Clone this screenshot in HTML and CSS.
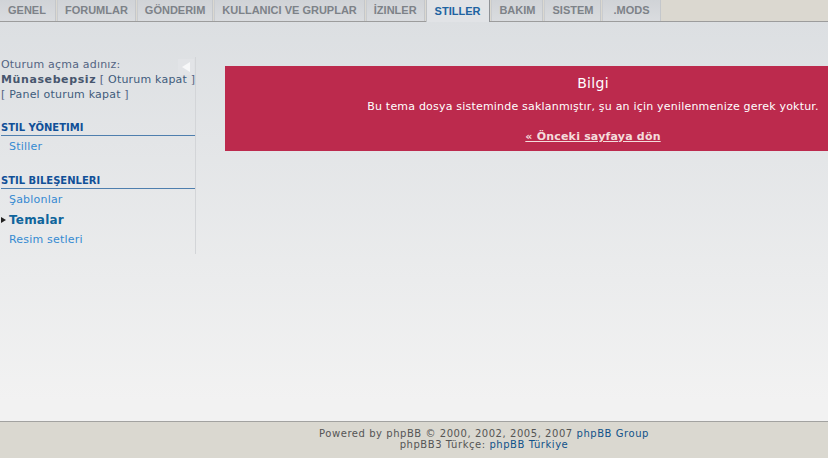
FILE: index.html
```html
<!DOCTYPE html>
<html lang="tr">
<head>
<meta charset="utf-8">
<title>Yönetim Kontrol Paneli</title>
<link rel="stylesheet" href="styles.css">
</head>
<body>
<div class="page">
  <div class="tabs">
    <a class="tab">GENEL</a>
    <a class="tab">FORUMLAR</a>
    <a class="tab">GÖNDERIM</a>
    <a class="tab">KULLANICI VE GRUPLAR</a>
    <a class="tab">İZINLER</a>
    <a class="tab active">STILLER</a>
    <a class="tab">BAKIM</a>
    <a class="tab">SISTEM</a>
    <a class="tab">.MODS</a>
  </div>
  <div class="content">
    <div class="sidebar">
      <span class="collapse"><svg width="10" height="10" viewBox="0 0 10 10"><polygon points="9,0 9,10 1,5" fill="#f7f8f9"/></svg></span>
      <div class="login">
        Oturum açma adınız:<br>
        <strong>Münasebepsiz</strong> [ <a>Oturum kapat</a> ]<br>
        [ <a>Panel oturum kapat</a> ]
      </div>
      <div class="menu-block">
        <div class="menu-head">STIL YÖNETIMI</div>
        <a class="menu-item">Stiller</a>
      </div>
      <div class="menu-block">
        <div class="menu-head">STIL BILEŞENLERI</div>
        <a class="menu-item">Şablonlar</a>
        <a class="menu-item current"><svg class="bullet" width="5" height="6" viewBox="0 0 5 6"><polygon points="0,0 5,3 0,6" fill="#222"/></svg>Temalar</a>
        <a class="menu-item">Resim setleri</a>
      </div>
    </div>
    <div class="main">
      <div class="message">
        <h2>Bilgi</h2>
        <p>Bu tema dosya sisteminde saklanmıştır, şu an için yenilenmenize gerek yoktur.</p>
        <a class="back">« Önceki sayfaya dön</a>
      </div>
    </div>
  </div>
  <div class="footer">
    Powered by phpBB © 2000, 2002, 2005, 2007 <a>phpBB Group</a><br>
    phpBB3 Türkçe: <a>phpBB Türkiye</a>
  </div>
</div>
</body>
</html>
```

FILE: styles.css
```css
html, body {
  margin: 0;
  padding: 0;
  height: 458px;
  overflow: hidden;
}
body {
  font-family: "DejaVu Sans", Verdana, sans-serif;
  background: #dcdfe2;
  letter-spacing: 0.2px;
}
.page {
  width: 968px;
  height: 458px;
  display: flex;
  flex-direction: column;
  background: linear-gradient(#dcdfe2 20px, #f2f2f2 400px);
}
.tabs {
  display: flex;
  height: 21px;
  background: #dbd8d0;
  border-bottom: 1px solid #9c9c9c;
  box-sizing: content-box;
  letter-spacing: 0;
}
.tab {
  display: flex;
  align-items: center;
  padding: 0 7px 1px 7px;
  margin-right: 1px;
  background: linear-gradient(#d0d3d7, #dadcdf);
  border-left: 1px solid #c9ccd0;
  border-right: 1px solid #c4c7cb;
  font-family: "Liberation Sans", Arial, sans-serif;
  font-weight: bold;
  font-size: 11px;
  color: #7d8288;
  white-space: nowrap;
}
.tab:first-child {
  border-left: none;
  padding: 0 9px 1px 8px;
}
.tab:last-child {
  padding: 0 10px 1px 10px;
}
.tab.active {
  background: #e1e3e6;
  color: #2063a1;
  height: 22px;
  margin-bottom: -1px;
  padding: 0 9px 0 8px;
  border-left-color: #bfc2c6;
  border-right-color: #8f9296;
}
.content {
  flex: 1;
  display: flex;
  align-items: flex-start;
}
.sidebar {
  position: relative;
  width: 194px;
  margin-top: 35px;
  padding: 0 0 4px 1px;
  border-right: 1px solid #d3d5d8;
  font-size: 11px;
  color: #536482;
  white-space: nowrap;
  overflow: hidden;
}
.collapse {
  position: absolute;
  top: 2px;
  right: 1px;
  width: 16px;
  height: 16px;
  background: #e2e4e7;
  display: flex;
  align-items: center;
  justify-content: center;
}
.login {
  line-height: 15px;
}
.login strong {
  color: #47566e;
  letter-spacing: 0.6px;
}
.login a {
  color: #3f5c7c;
}
.menu-block {
  margin-top: 19px;
}
.menu-block + .menu-block {
  margin-top: 17px;
}
.menu-head {
  font-size: 10px;
  font-weight: bold;
  color: #115098;
  padding-bottom: 1px;
  border-bottom: 1px solid #4f7fae;
  margin-bottom: 1px;
  line-height: 13px;
  letter-spacing: 0;
}
.menu-item {
  display: block;
  position: relative;
  padding-left: 8px;
  height: 20px;
  line-height: 20px;
  color: #368ad2;
}
.menu-item.current {
  font-weight: bold;
  font-size: 12px;
  color: #0f659c;
}
.bullet {
  position: absolute;
  left: 0;
  top: 7px;
}
.main {
  flex: 1;
  padding: 44px 7px 0 29px;
}
.message {
  background: #bc2a4d;
  color: #fff;
  text-align: center;
  padding: 8px 0 9px;
  height: 68px;
  box-sizing: content-box;
}
.message h2 {
  margin: 0;
  font-size: 14px;
  font-weight: normal;
  line-height: 18px;
  letter-spacing: 0.3px;
}
.message p {
  margin: 7px 0 0;
  font-size: 11px;
  line-height: 15px;
}
.back {
  display: inline-block;
  margin-top: 16px;
  font-size: 11px;
  font-weight: bold;
  color: #f4dcdc;
  text-decoration: underline;
}
.footer {
  height: 37px;
  border-top: 1px solid #a2a2a0;
  background: #dad8d0;
  text-align: center;
  font-size: 10px;
  line-height: 11px;
  letter-spacing: 0.55px;
  color: #555;
  padding-top: 6px;
  box-sizing: border-box;
}
.footer a {
  color: #105289;
}
```
